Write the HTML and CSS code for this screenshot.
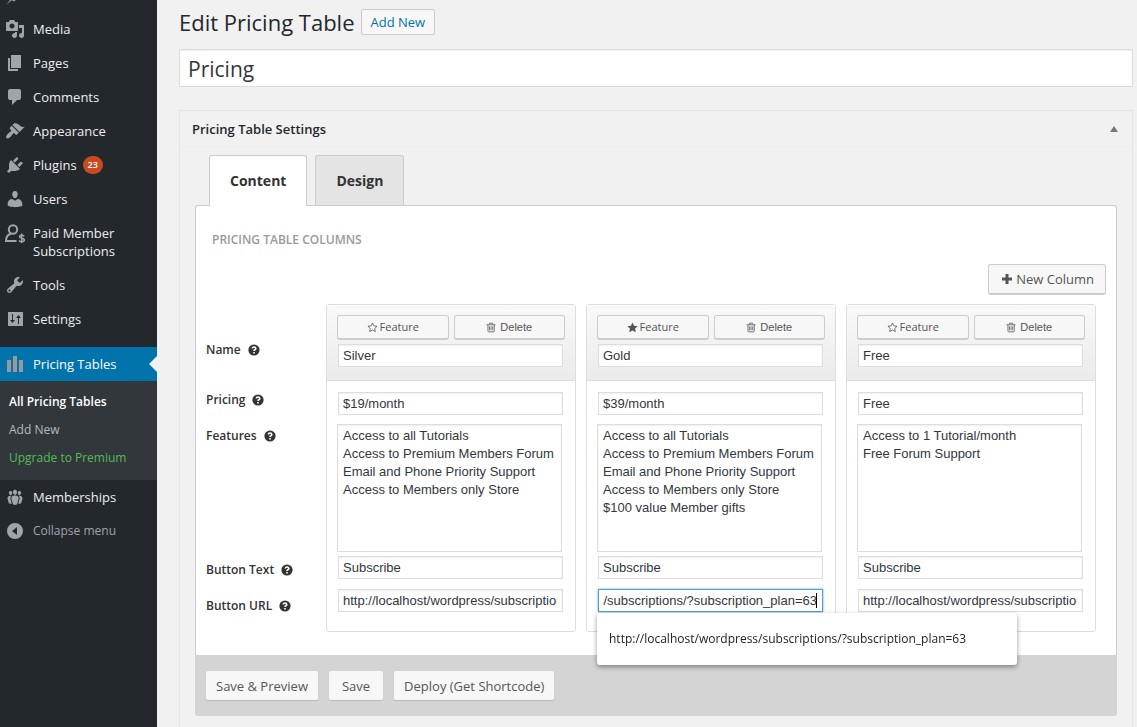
FILE: index.html
```html
<!DOCTYPE html>
<html lang="en">
<head>
<meta charset="utf-8">
<title>Edit Pricing Table</title>
<link rel="stylesheet" href="styles.css">
</head>
<body>
<svg class="sprite" aria-hidden="true">
  <symbol id="star-o" viewBox="0 0 14 14"><path d="M7 1.2l1.75 3.7 4.05.5-3 2.8.8 4L7 10.2l-3.6 2 .8-4-3-2.8 4.05-.5z" fill="none" stroke="currentColor"/></symbol>
  <symbol id="star" viewBox="0 0 14 14"><path d="M7 .6l2 4.1 4.6.6-3.3 3.1.8 4.500L7 10.700l-4.100 2.200.8-4.500L.4 5.300 5 4.700z" fill="currentColor"/></symbol>
  <symbol id="trash" viewBox="0 0 14 14"><path d="M2.500 3.500v8q0 1 1 1h6q1 0 1-1v-8M.8 3.500h11.400M4.500 3V1.500h4V3M4.500 5.500v5M6.500 5.500v5M8.500 5.500v5" fill="none" stroke="currentColor"/></symbol>
  <symbol id="help" viewBox="0 0 12 12"><circle cx="6" cy="6" r="5.600" fill="currentColor"/><path d="M4.200 4.500Q4.400 3 6 3t1.800 1.400Q7.800 5.200 6.800 5.800 6 6.200 6 7" fill="none" stroke="#fff" stroke-width="1.600"/><path d="M5.200 8h1.600v1.500H5.200z" fill="#fff"/></symbol>
</svg>
<div class="layout">
  <nav class="sidebar" aria-label="Main menu">
    <div class="menu-cut"><svg class="menu-icon" viewBox="0 0 20 12"><path d="M1.500 4.500L5 0h6L8.500 1.500 7 0z" fill="currentColor"/></svg></div>
    <ul class="menu">
      <li><a href="#"><svg class="menu-icon" viewBox="0 0 20 20"><path d="M13 11V4c0-.55-.45-1-1-1h-1.670L9 1H5L3.670 3H2c-.55 0-1 .45-1 1v7c0 .55.45 1 1 1h10c.55 0 1-.45 1-1zM7 4.500c1.380 0 2.500 1.120 2.500 2.500S8.380 9.500 7 9.500 4.500 8.380 4.500 7 5.620 4.500 7 4.500zM14 6h5v10.500c0 1.380-1.120 2.500-2.500 2.500S14 17.880 14 16.500s1.120-2.500 2.500-2.500c.17 0 .34.02.5.05V9h-3V6zm-4 8.050V13h2v3.500c0 1.380-1.120 2.500-2.500 2.500S7 17.880 7 16.500 8.120 14 9.500 14c.17 0 .34.02.5.05z" fill="currentColor"/></svg><span>Media</span></a></li>
      <li><a href="#"><svg class="menu-icon" viewBox="0 0 20 20"><path d="M6 15V2h10v13H6zm-1 1h8v2H3V5h2v11z" fill="currentColor"/></svg><span>Pages</span></a></li>
      <li><a href="#"><svg class="menu-icon" viewBox="0 0 20 20"><path d="M5 2h9c1.100 0 2 .9 2 2v7c0 1.100-.9 2-2 2h-2l-5 5v-5H5c-1.100 0-2-.9-2-2V4c0-1.100.9-2 2-2z" fill="currentColor"/></svg><span>Comments</span></a></li>
      <li><a href="#"><svg class="menu-icon" viewBox="0 0 20 20"><path d="M14.480 11.060L7.410 3.990l1.500-1.500c.5-.56 2.300-.47 3.510.32 1.210.8 1.430 1.280 2.910 2.100 1.180.64 2.450 1.260 4.450.85zm-.71.71L6.700 4.700 4.930 6.470c-.39.39-.39 1.020 0 1.410l1.060 1.060c.39.39.39 1.030 0 1.420-.6.6-1.430 1.110-2.210 1.690-.35.26-.7.53-1.010.84C1.430 14.230.4 16.080 1.400 17.070c.99 1 2.840-.03 4.180-1.360.31-.31.58-.66.85-1.020.57-.78 1.080-1.610 1.690-2.210.39-.39 1.020-.39 1.410 0l1.060 1.060c.39.39 1.020.39 1.410 0z" fill="currentColor"/></svg><span>Appearance</span></a></li>
      <li><a href="#"><svg class="menu-icon" viewBox="0 0 20 20"><path d="M13.110 4.360L9.870 7.600 8 5.730l3.240-3.240c.35-.34 1.050-.2 1.560.32.52.51.66 1.210.31 1.550zm-8 1.770l.91-1.120 9.010 9.010-1.190.84c-.71.71-2.630 1.160-3.820 1.160H6.140L4.900 17.260c-.59.59-1.540.59-2.120 0-.59-.58-.59-1.530 0-2.120l1.240-1.240v-3.880c0-1.130.4-3.190 1.090-3.890zm7.260 3.970l3.240-3.240c.34-.35 1.040-.21 1.550.31.52.51.66 1.210.31 1.550l-3.240 3.250z" fill="currentColor"/></svg><span>Plugins</span><span class="badge">23</span></a></li>
      <li><a href="#"><svg class="menu-icon" viewBox="0 0 20 20"><path d="M10 9.250c-2.270 0-2.730-3.440-2.730-3.440C7 4.020 7.820 2 9.970 2c2.160 0 2.980 2.020 2.710 3.810 0 0-.41 3.440-2.680 3.440zm0 2.570L12.720 10c2.390 0 4.520 2.330 4.520 4.530v2.490s-3.650 1.130-7.240 1.130c-3.650 0-7.240-1.130-7.240-1.130v-2.490c0-2.250 1.940-4.480 4.470-4.480z" fill="currentColor"/></svg><span>Users</span></a></li>
      <li><a href="#"><svg class="menu-icon" viewBox="0 0 20 20"><g fill="none" stroke="currentColor"><circle cx="8" cy="6.500" r="4.200" stroke-width="2"/><path d="M6 10.500Q1 12 1 18h10.500" stroke-width="2"/><path d="M19.200 13.200q-1-1-2.600-1-2 0-2 1.500 0 1.300 2.300 1.600 2.400.4 2.400 1.800 0 1.600-2.400 1.600-1.900 0-2.800-1.200M16.700 10.500v9.500" stroke-width="1.500"/></g></svg><span>Paid Member Subscriptions</span></a></li>
      <li><a href="#"><svg class="menu-icon" viewBox="0 0 20 20"><path d="M16.680 9.770c-1.340 1.340-3.300 1.670-4.950.99l-5.410 6.520c-.99.99-2.590.99-3.580 0s-.99-2.590 0-3.570l6.520-5.420c-.68-1.650-.35-3.610.99-4.950 1.280-1.280 3.120-1.620 4.720-1.060l-2.890 2.890 2.820 2.820 2.860-2.870c.53 1.580.18 3.390-1.080 4.650zM3.810 16.210c.4.39 1.040.39 1.430 0 .4-.4.4-1.040 0-1.430-.39-.4-1.030-.4-1.430 0-.39.39-.39 1.030 0 1.430z" fill="currentColor"/></svg><span>Tools</span></a></li>
      <li><a href="#"><svg class="menu-icon" viewBox="0 0 20 20"><path fill-rule="evenodd" d="M3 3h15v14H3zM7 5h1v6h2L7.500 14 5 11h2zM13 15h1V9h2l-2.500-3L11 9h2z" fill="currentColor"/></svg><span>Settings</span></a></li>
      <li class="current">
        <a href="#"><svg class="menu-icon" viewBox="0 0 20 20"><path d="M2 6h4v12H2zM8 2h4v16H8zM14 6h4v12h-4z" fill="#999"/></svg><span>Pricing Tables</span></a>
        <ul class="submenu">
          <li><a class="selected" href="#">All Pricing Tables</a></li>
          <li><a href="#">Add New</a></li>
          <li><a class="upgrade" href="#">Upgrade to Premium</a></li>
        </ul>
      </li>
      <li><a href="#"><svg class="menu-icon" viewBox="0 0 20 20"><path d="M8.030 4.460c-.29 1.280.55 3.460 1.970 3.460 1.410 0 2.250-2.180 1.960-3.460-.22-.98-1.080-1.630-1.960-1.630-.89 0-1.740.65-1.970 1.630zm-4.130.9c-.25 1.080.47 2.930 1.670 2.930s1.920-1.850 1.670-2.930c-.19-.83-.92-1.390-1.670-1.390s-1.480.56-1.670 1.390zm8.860 0c-.25 1.080.47 2.930 1.660 2.930 1.200 0 1.920-1.850 1.670-2.930-.19-.83-.92-1.390-1.670-1.390-.74 0-1.470.56-1.660 1.390zm-.59 11.430l1.250-4.300C14.200 10 12.710 8.470 10 8.470c-2.720 0-4.210 1.530-3.440 4.020l1.260 4.300C8.050 17.510 9 18 10 18c.98 0 1.940-.49 2.170-1.210zm-6.100-7.630c-.49.67-.96 1.830-.42 3.590l1.120 3.790c-.34.2-.77.31-1.200.31-.85 0-1.650-.41-1.850-1.030l-1.070-3.650c-.65-2.110.61-3.400 2.920-3.400.27 0 .54.02.79.06-.1.1-.2.22-.29.33zm8.350-.39c2.310 0 3.580 1.290 2.920 3.400l-1.070 3.650c-.2.62-1 1.030-1.850 1.030-.43 0-.86-.11-1.200-.31l1.110-3.770c.55-1.780.08-2.940-.42-3.610-.08-.11-.18-.23-.28-.33.25-.04.51-.06.79-.06z" fill="currentColor"/></svg><span>Memberships</span></a></li>
      <li><button class="collapse" type="button"><svg class="menu-icon" viewBox="0 0 20 20"><path fill-rule="evenodd" d="M10 2a8 8 0 100 16 8 8 0 000-16zM12 6v8L7 10z" fill="currentColor"/></svg><span>Collapse menu</span></button></li>
    </ul>
  </nav>

  <main class="main">
    <header class="heading">
      <h1>Edit Pricing Table</h1>
      <a class="add-new" href="#">Add New</a>
    </header>
    <input class="title-input" type="text" aria-label="Title" value="Pricing">

    <section class="postbox">
      <header class="postbox-head">
        <h2>Pricing Table Settings</h2>
        <button class="toggle" type="button" aria-label="Toggle panel"><svg viewBox="0 0 8 6"><path d="M4 0l4 6H0z" fill="currentColor"/></svg></button>
      </header>
      <div class="inside">
        <div class="tabs">
          <button class="tab active" type="button">Content</button>
          <button class="tab" type="button">Design</button>
        </div>
        <div class="panel">
          <h3>PRICING TABLE COLUMNS</h3>
          <div class="toolbar">
            <button class="new-column" type="button"><svg viewBox="0 0 10 10"><path d="M3.500 0h3v3.500H10v3H6.500V10h-3V6.500H0v-3h3.500z" fill="currentColor"/></svg>New Column</button>
          </div>
          <div class="columns">
            <div class="labels">
              <div class="label label-name">Name <svg class="help"><use href="#help"/></svg></div>
              <div class="label">Pricing <svg class="help"><use href="#help"/></svg></div>
              <div class="label label-features">Features <svg class="help"><use href="#help"/></svg></div>
              <div class="label">Button Text <svg class="help"><use href="#help"/></svg></div>
              <div class="label">Button URL <svg class="help"><use href="#help"/></svg></div>
            </div>

            <div class="column">
              <div class="column-head">
                <div class="actions">
                  <button type="button"><svg><use href="#star-o"/></svg>Feature</button>
                  <button class="delete" type="button"><svg><use href="#trash"/></svg>Delete</button>
                </div>
                <input class="field" type="text" aria-label="Name" value="Silver">
              </div>
              <div class="column-body">
                <input class="field" type="text" aria-label="Pricing" value="$19/month">
                <textarea class="features" aria-label="Features">Access to all Tutorials
Access to Premium Members Forum
Email and Phone Priority Support
Access to Members only Store</textarea>
                <input class="field" type="text" aria-label="Button Text" value="Subscribe">
                <div class="url"><input class="field" type="text" aria-label="Button URL" value="http://localhost/wordpress/subscriptions/"></div>
              </div>
            </div>

            <div class="column">
              <div class="column-head">
                <div class="actions">
                  <button type="button"><svg><use href="#star"/></svg>Feature</button>
                  <button class="delete" type="button"><svg><use href="#trash"/></svg>Delete</button>
                </div>
                <input class="field" type="text" aria-label="Name" value="Gold">
              </div>
              <div class="column-body">
                <input class="field" type="text" aria-label="Pricing" value="$39/month">
                <textarea class="features" aria-label="Features">Access to all Tutorials
Access to Premium Members Forum
Email and Phone Priority Support
Access to Members only Store
$100 value Member gifts</textarea>
                <input class="field" type="text" aria-label="Button Text" value="Subscribe">
                <div class="url">
                  <input class="field focused" id="gold-url" type="text" aria-label="Button URL" autocomplete="off" value="http://localhost/wordpress/subscriptions/?subscription_plan=63">
                  <span class="caret"></span>
                  <div class="suggestions">http://localhost/wordpress/subscriptions/?subscription_plan=63</div>
                </div>
              </div>
            </div>

            <div class="column">
              <div class="column-head">
                <div class="actions">
                  <button type="button"><svg><use href="#star-o"/></svg>Feature</button>
                  <button class="delete" type="button"><svg><use href="#trash"/></svg>Delete</button>
                </div>
                <input class="field" type="text" aria-label="Name" value="Free">
              </div>
              <div class="column-body">
                <input class="field" type="text" aria-label="Pricing" value="Free">
                <textarea class="features" aria-label="Features">Access to 1 Tutorial/month
Free Forum Support</textarea>
                <input class="field" type="text" aria-label="Button Text" value="Subscribe">
                <div class="url"><input class="field" type="text" aria-label="Button URL" value="http://localhost/wordpress/subscriptions/"></div>
              </div>
            </div>
          </div>
        </div>
        <footer class="save-bar">
          <button type="button">Save &amp; Preview</button>
          <button class="save" type="button">Save</button>
          <button type="button">Deploy (Get Shortcode)</button>
        </footer>
      </div>
    </section>
  </main>
</div>
<script src="script.js"></script>
</body>
</html>
```

FILE: styles.css
```css
* { box-sizing: border-box; }
html, body { min-height: 100%; }
body {
  margin: 0;
  background: #f1f1f1;
  color: #32373c;
  font: 13px/18px "Open Sans", "Noto Sans", sans-serif;
}
button, input, textarea { font: inherit; color: inherit; margin: 0; }
a { text-decoration: none; color: inherit; }
ul { list-style: none; margin: 0; padding: 0; }
h1, h2, h3 { margin: 0; }
.sprite { position: absolute; width: 0; height: 0; }
.layout { display: flex; min-height: 100vh; }

/* Sidebar */
.sidebar { flex: none; width: 157px; background: #23282d; color: #eee; }
.menu-cut { height: 12px; padding-left: 5px; }
.menu-cut .menu-icon { height: 12px; }
.menu-icon { display: block; flex: none; width: 20px; height: 20px; color: #a0a5aa; }
.menu > li > a, .collapse {
  display: flex;
  align-items: flex-start;
  gap: 8px;
  padding: 8px 5px;
  width: 100%;
}
.menu > li > a > .menu-icon, .collapse .menu-icon { margin: -1px 0; }
.badge {
  padding: 0 5px;
  margin-left: -2px;
  border-radius: 10px;
  background: #ca4a1f;
  color: #fff;
  font-size: 9px;
  font-weight: 600;
}
.current { margin-top: 11px; background: #32373c; }
.menu > .current > a { position: relative; background: #0073aa; color: #fff; }
.current > a::after {
  content: "";
  position: absolute;
  right: 0;
  top: 9px;
  border: 8px solid transparent;
  border-left-width: 0;
  border-right-color: #f1f1f1;
}
.submenu { padding: 7px 0 8px; }
.submenu a { display: block; padding: 5px 9px; color: #b4b9be; font-size: 12px; }
.submenu .selected { color: #fff; font-weight: 600; }
.submenu .upgrade { color: #5b5; }
.collapse { border: 0; background: none; color: #a0a5aa; text-align: left; font-size: 12px; }

/* Heading */
.main { flex: 1; min-width: 0; display: flex; flex-direction: column; padding: 8px 4px 0 22px; }
.heading { display: flex; align-items: center; gap: 6px; height: 28px; }
h1 { color: #23282d; font-size: 22px; font-weight: 400; line-height: 28px; }
.add-new {
  padding: 3px 9px;
  border: 1px solid #ccc;
  border-radius: 2px;
  background: #f7f7f7;
  color: #0073aa;
}
.title-input {
  display: block;
  width: 100%;
  height: 38px;
  margin-top: 13px;
  padding: 1px 8px 0;
  border: 1px solid #ddd;
  background: #fff;
  box-shadow: inset 0 1px 2px rgba(0, 0, 0, .07);
  font-size: 21px;
  outline: 0;
}

/* Settings box */
.postbox { flex: 1; margin-top: 23px; border: 1px solid #e5e5e5; border-bottom: 0; }
.postbox-head {
  display: flex;
  align-items: center;
  justify-content: space-between;
  height: 36px;
  padding: 0 14px 0 12px;
  border-bottom: 1px solid #eee;
}
h2 { color: #23282d; font-size: 13px; font-weight: 600; }
.toggle { padding: 0; border: 0; background: none; color: #72777c; }
.toggle svg { display: block; width: 8px; height: 6px; }
.inside { padding: 8px 15px; }
.tabs { display: flex; gap: 8px; padding-left: 14px; }
.tab {
  height: 50px;
  padding: 0 20px;
  border: 1px solid #ccc;
  border-bottom: 0;
  border-radius: 3px 3px 0 0;
  background: #e4e4e4;
  color: #333;
  font-size: 14px;
  font-weight: 700;
}
.tab.active { position: relative; height: 51px; margin-bottom: -1px; background: #fff; }
.panel {
  padding: 25px 10px 23px;
  border: 1px solid #ccc;
  border-bottom: 0;
  border-radius: 3px 3px 0 0;
  background: #fff;
}
h3 { padding-left: 6px; color: #999; font-size: 12px; font-weight: 600; }
.toolbar { display: flex; justify-content: flex-end; margin: 15px 0 9px; }
.new-column {
  display: flex;
  align-items: center;
  gap: 4px;
  height: 31px;
  padding: 0 11px 0 13px;
  border: 1px solid #ccc;
  border-bottom-width: 2px;
  border-radius: 3px;
  background: #f7f7f7;
  color: #555;
}
.new-column svg { width: 10px; height: 10px; }

/* Column grid */
.columns {
  display: grid;
  grid-template-columns: 110px repeat(3, minmax(0, 1fr));
  gap: 10px;
  padding-right: 10px;
}
.labels { padding-top: 28px; }
.label { display: flex; align-items: center; gap: 7px; height: 36px; font-weight: 600; font-size: 12px; color: #333; }
.label-name { margin-bottom: 14px; }
.label-features { height: 134px; padding-top: 9px; align-items: flex-start; }
.help { width: 12px; height: 12px; }
.label-features .help { margin-top: 3px; }
.column { border: 1px solid #ddd; border-radius: 3px; }
.column-head {
  height: 76px;
  padding: 10px;
  border-bottom: 1px solid #ddd;
  background: linear-gradient(#f9f9f9, #ebebeb);
}
.actions { display: grid; grid-template-columns: 1fr 1fr; gap: 5px; margin-bottom: 4px; }
.actions button {
  display: flex;
  align-items: center;
  justify-content: center;
  gap: 2px;
  height: 25px;
  padding: 0;
  border: 1px solid #ccc;
  border-bottom-width: 2px;
  border-radius: 3px;
  background: #f7f7f7;
  color: #555;
  font-size: 11px;
}
.actions svg { width: 11px; height: 11px; }
.actions .delete { gap: 3px; font-family: "Liberation Sans", Arial, sans-serif; }
.field, .features {
  display: block;
  border: 1px solid #ddd;
  border-radius: 0;
  background: #fff;
  box-shadow: inset 0 1px 2px rgba(0, 0, 0, .07);
  font: 13px/18px "Liberation Sans", Arial, sans-serif;
  outline: 0;
}
.field { width: 100%; height: 23px; padding: 0 5px 0 4px; }
.column-head > .field { margin: 0 1px; width: calc(100% - 3px); }
.column-body { padding: 11px 12px 19px 11px; }
.features {
  width: 100%;
  height: 128px;
  margin: 9px 0 4px -1px;
  padding: 2px 5px;
  resize: none;
  overflow: hidden;
}
.url { position: relative; margin-top: 10px; }
.field.focused { border-color: #5b9dd9; box-shadow: 0 0 2px rgba(30, 140, 190, .8); caret-color: transparent; }
.caret {
  position: absolute;
  right: 6px;
  top: 4px;
  width: 1px;
  height: 15px;
  background: #000;
}
.suggestions {
  position: absolute;
  z-index: 2;
  left: -1px;
  top: 24px;
  width: 420px;
  padding: 17px 12px;
  border-radius: 3px;
  background: #fff;
  box-shadow: 0 2px 5px rgba(0, 0, 0, .4);
  color: #222;
  font-size: 12px;
}

/* Save bar */
.save-bar {
  display: flex;
  gap: 11px;
  padding: 16px 11px;
  height: 61px;
  border-radius: 0 0 3px 3px;
  background: #d4d4d4;
}
.save-bar button {
  height: 29px;
  padding: 0 10px;
  border: 0;
  border-radius: 2px;
  background: #f7f7f7;
  box-shadow: 0 1px 1px #bbb;
  color: #555;
}
.save-bar .save { padding: 0 13px; }
```

FILE: script.js
```js
const url = document.getElementById("gold-url");
url.focus({ preventScroll: true });
url.setSelectionRange(url.value.length, url.value.length);
url.scrollLeft = url.scrollWidth;
```
